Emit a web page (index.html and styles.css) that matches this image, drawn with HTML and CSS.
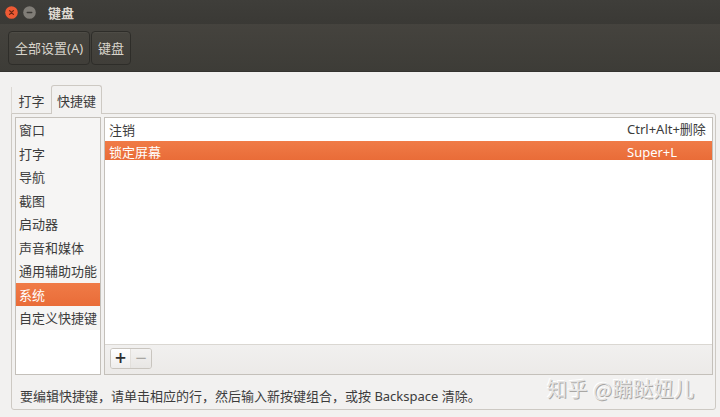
FILE: index.html
```html
<!DOCTYPE html>
<html lang="zh-CN">
<head>
<meta charset="utf-8">
<title>键盘</title>
<link rel="stylesheet" href="styles.css">
</head>
<body>
<div class="window">
  <header class="titlebar">
    <span class="wbtn close">
      <svg width="13" height="13" viewBox="0 0 13 13"><circle cx="6.5" cy="6.5" r="6.3" fill="#ee5a34"/><path d="M4.6 4.6 L8.4 8.4 M8.4 4.6 L4.6 8.4" stroke="#6b2512" stroke-width="1.3" stroke-linecap="round"/></svg>
    </span>
    <span class="wbtn min">
      <svg width="13" height="13" viewBox="0 0 13 13"><circle cx="6.5" cy="6.5" r="6.3" fill="#807d77"/><path d="M4.2 6.5 H8.8" stroke="#3a3935" stroke-width="1.3" stroke-linecap="round"/></svg>
    </span>
    <span class="title">键盘</span>
  </header>
  <nav class="toolbar">
    <button class="tbtn">全部设置(A)</button>
    <button class="tbtn">键盘</button>
  </nav>
  <main class="content">
    <div class="tabs">
      <span class="tab">打字</span>
      <span class="tab active">快捷键</span>
    </div>
    <section class="notebook">
      <div class="panes">
        <ul class="cats">
          <li>窗口</li>
          <li>打字</li>
          <li>导航</li>
          <li>截图</li>
          <li>启动器</li>
          <li>声音和媒体</li>
          <li>通用辅助功能</li>
          <li class="sel">系统</li>
          <li>自定义快捷键</li>
        </ul>
        <div class="shortcuts">
          <div class="rows">
            <div class="row"><span class="name">注销</span><span class="key">Ctrl+Alt+删除</span></div>
            <div class="row sel cut"><span class="name">锁定屏幕</span><span class="key">Super+L</span></div>
          </div>
          <div class="listbar">
            <div class="pm">
              <span class="plus">+</span><span class="minus">−</span>
            </div>
          </div>
        </div>
      </div>
      <p class="hint">要编辑快捷键，请单击相应的行，然后输入新按键组合，或按 Backspace 清除。</p>
    </section>
  </main>
  <div class="watermark">知乎 @蹦跶妞儿</div>
</div>
</body>
</html>
```

FILE: styles.css
```css
* { box-sizing: border-box; }
html, body { margin: 0; padding: 0; }
body {
  width: 720px;
  height: 417px;
  overflow: hidden;
  background: #f2f1f0;
  font-family: "Noto Sans", "Noto Sans CJK SC", sans-serif;
  font-size: 13px;
  color: #3c3c3c;
}
.window { position: relative; width: 720px; height: 417px; }

.titlebar {
  height: 24px;
  background: linear-gradient(#3f3e3a, #3a3935);
  display: flex;
  align-items: center;
  padding-left: 4px;
  gap: 2px;
}
.wbtn { width: 14px; height: 14px; display: flex; align-items: center; justify-content: center; margin-top: 1px; }
.wbtn svg { display: block; }
.min { margin-left: 2px; }
.title {
  margin-left: 10px;
  color: #dfdbd2;
  font-weight: bold;
  font-size: 13px;
  font-family: "Noto Sans CJK SC", sans-serif;
}

.toolbar {
  height: 48px;
  background: linear-gradient(#45433e, #3d3c37);
  display: flex;
  align-items: center;
  padding: 0 8px 0 8px;
  gap: 1px;
  border-bottom: 1px solid #34332f;
}
.tbtn {
  height: 34px;
  padding: 0 6px;
  margin-top: 0;
  background: linear-gradient(#47453f, #403e39);
  border: 1px solid #2e2d29;
  border-radius: 4px;
  color: #d9d5cc;
  font-family: "Noto Sans", "Noto Sans CJK SC", sans-serif;
  font-size: 13px;
  box-shadow: inset 0 1px 0 rgba(255,255,255,0.04);
}

.content { padding: 13px 4px 0 11px; }
.tabs { height: 28px; display: flex; align-items: flex-end; position: relative; z-index: 1; }
.tab {
  height: 26px;
  padding: 0 6px;
  display: flex;
  align-items: center;
  border-left: 1px solid #dcd8d3;
  color: #3c3c3c;
  font-family: "Noto Sans CJK SC", sans-serif;
}
.tab:first-child { width: 40px; justify-content: center; padding: 0; }
.tab.active {
  width: 51px;
  padding: 0;
  justify-content: center;
  border: 1px solid #cdc9c3;
  border-bottom: none;
  border-radius: 3px 3px 0 0;
  background: #f2f1f0;
  margin-bottom: -1px;
  height: 29px;
}

.notebook {
  height: 297px;
  border: 1px solid #cdc9c3;
  border-radius: 0 3px 3px 3px;
  background: #f2f1f0;
  padding: 3px 2px 0 3px;
}
.panes { display: flex; gap: 3px; height: 258px; }

.cats {
  list-style: none;
  margin: 0;
  padding: 0;
  width: 86px;
  border: 1px solid #c4c0ba;
  background: #ffffff;
  font-family: "Noto Sans CJK SC", sans-serif;
}
.cats li {
  height: 23.5px;
  line-height: 23.5px;
  padding-left: 3px;
  background: #f6f5f4;
  white-space: nowrap;
}
.cats li.sel { background: linear-gradient(#f07b47, #e96c38); color: #ffffff; }

.shortcuts {
  flex: 1;
  display: flex;
  flex-direction: column;
  border: 1px solid #c4c0ba;
  background: #efeeed;
}
.rows { flex: 1; background: #ffffff; border-bottom: 1px solid #dad7d2; }
.row {
  display: flex;
  justify-content: space-between;
  height: 23px;
  line-height: 23px;
  padding: 0 0 0 4px;
  font-family: "Noto Sans", "Noto Sans CJK SC", sans-serif;
}
.row .name { font-family: "Noto Sans CJK SC", sans-serif; }
.row .key { width: 85px; text-align: left; white-space: nowrap; }
.row.sel { background: linear-gradient(#f07b47, #e96c38); color: #ffffff; }
.row.cut { height: 19px; line-height: 22px; overflow: hidden; }

.listbar { height: 29px; padding: 3px 0 0 5px; background: linear-gradient(#f1f0ef, #eceae8); }
.pm {
  display: inline-flex;
  height: 21px;
  border: 1px solid #c9c5bf;
  border-radius: 3px;
  overflow: hidden;
}
.pm span {
  width: 20px;
  display: flex;
  align-items: center;
  justify-content: center;
  font-family: "DejaVu Sans", sans-serif;
  font-size: 15px;
  line-height: 1;
}
.plus { background: linear-gradient(#ffffff, #eeedec); color: #2e2e2e; font-weight: bold; border-right: 1px solid #e2dfdb; }
.minus { background: linear-gradient(#f3f2f1, #e8e6e4); color: #a8a6a2; }

.hint {
  margin: 0;
  padding: 12px 0 0 5px;
  line-height: 18px;
  font-family: "Noto Sans", "Noto Sans CJK SC", sans-serif;
  color: #3c3c3c;
}

.watermark {
  position: absolute;
  left: 547px;
  top: 374px;
  font-family: "Noto Sans CJK SC", sans-serif;
  font-size: 20px;
  letter-spacing: 0.5px;
  color: #e6e5e4;
  text-shadow: 1px 1px 0 #a9a7a4, -1px -1px 0 #ffffff;
  white-space: nowrap;
}
```
